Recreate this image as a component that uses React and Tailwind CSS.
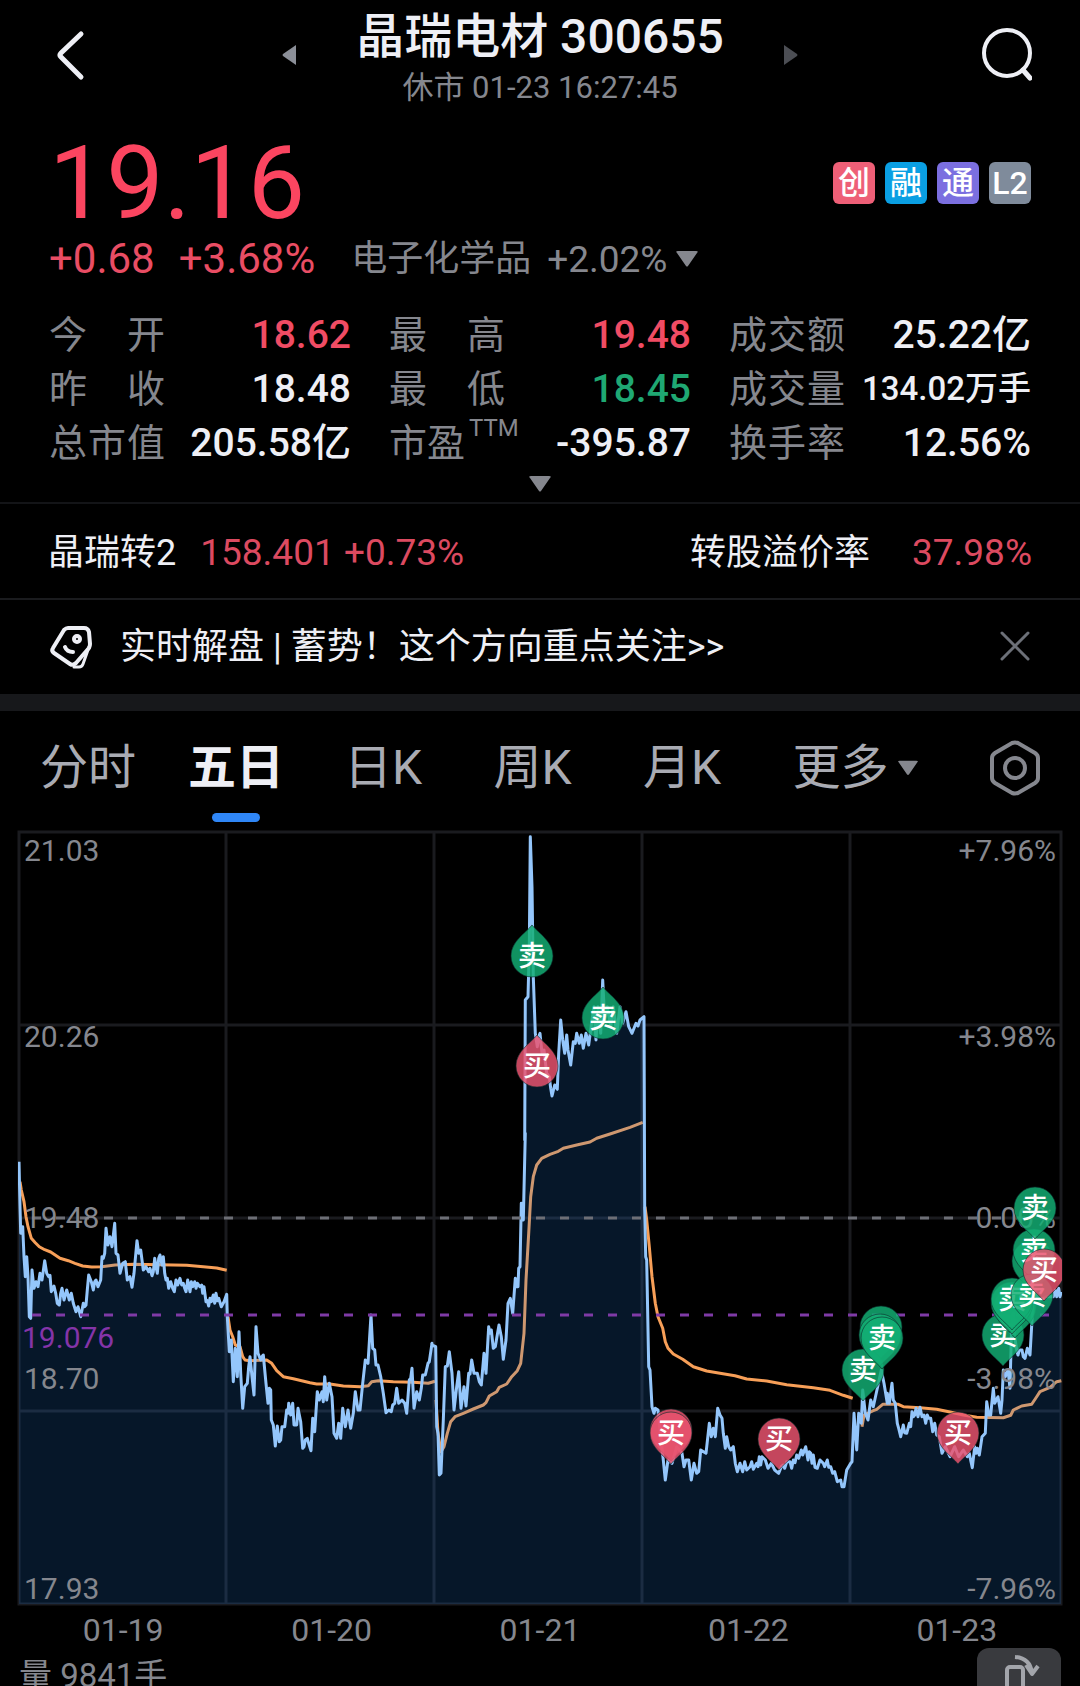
import React from 'react'

const tags = [
  { label: '创', className: 'bg-[#ee5f77]' },
  { label: '融', className: 'bg-[#0a9fe3]' },
  { label: '通', className: 'bg-[#7b6fe0]' },
  { label: 'L2', className: 'bg-[#7f8b9b]' },
]

const stats = [
  { label: '今开', value: '18.62', tone: 'text-[#f04c64]' },
  { label: '最高', value: '19.48', tone: 'text-[#f04c64]' },
  { label: '成交额', value: '25.22亿', tone: 'text-[#eeeff5]' },
  { label: '昨收', value: '18.48', tone: 'text-[#eeeff5]' },
  { label: '最低', value: '18.45', tone: 'text-[#1fa873]' },
  { label: '成交量', value: '134.02万手', tone: 'text-[#eeeff5]', small: true },
  { label: '总市值', value: '205.58亿', tone: 'text-[#eeeff5]' },
  { label: '市盈', sup: 'TTM', value: '-395.87', tone: 'text-[#eeeff5]' },
  { label: '换手率', value: '12.56%', tone: 'text-[#eeeff5]' },
]

const days = ['01-19', '01-20', '01-21', '01-22', '01-23']

// Every segment has an origin on the chart; its points are in thirds of a unit.
const priceSegments = [
  {
    x: 0,
    y: 306,
    points:
      '57,95 60,230 62,310 68,290 72,380 76,440 80,380 84,440 88,560 92,565 96,420 102,475 108,455 114,470 120,430 126,450 134,392 140,430 146,440 150,436 154,485 162,468 167,490 172,520 178,525 182,490 186,475 192,510 200,480 204,495 208,510 214,490 220,520 228,545 234,530 242,560 250,520 254,530 258,525 262,480 266,435 274,455 280,480 284,455 288,450 294,470 302,450 306,380 310,385 314,370 318,295 324,345 330,320 336,350 344,280 348,370 354,375 360,430 368,400 376,395 382,450 390,440 396,472 402,430 411,332 416,370 422,360 430,420 438,410 446,425 450,415 456,437 460,425 464,385 468,410 472,430 476,385 480,375 486,405 490,380 494,430 498,450 502,445 506,475 512,455 518,475 523,485 528,450 533,465 540,445 545,465 550,460 554,475 558,485 563,450 566,465 570,485 574,455 578,470 584,455 588,475 592,460 600,470 605,465 608,490 612,470 618,515 622,512 626,528 630,505 634,515 640,495 644,520 648,490 652,512 656,505 664,530 672,515 680,493 682,560 688,665 694,630 700,755 706,655 712,740 717,605 722,730 728,835 734,770 742,760 746,710 750,680 756,740 762,795 768,590 774,670 782,690 786,680 790,675 798,760 804,820 808,775 812,780 814,870 820,885 826,948 832,888 838,935 842,930 846,890 854,890 860,840 864,850 866,820 872,855 878,820 882,885 890,885 894,835 902,875 908,955 912,950 916,930 922,925 926,940 933,962 938,865 944,905 952,785 958,810 966,785 970,815 974,740 980,810 988,760 996,800 1002,910 1010,925 1016,880 1022,925 1028,835 1036,890 1044,840 1052,895 1060,850 1066,785 1074,840 1080,840 1088,760 1096,690 1104,700 1113,555 1118,655 1124,660 1128,705 1134,705 1142,740 1150,790 1158,848 1166,840 1174,845 1178,825 1184,820 1190,775 1196,820 1206,810 1214,820 1220,850 1228,750 1232,745 1236,715 1242,835 1250,785 1258,810 1264,775 1268,735 1276,735 1284,700 1288,695 1296,640',
  },
  {
    x: 430,
    y: 276,
    points:
      '5,735 17,740 20,980 24,1000 28,1125 33,1120 40,960 46,800 52,798 58,755 66,820 72,930 80,860 86,815 93,925 102,860 108,918 116,820 120,822 125,780 132,820 142,820 148,845 154,855 162,760 168,820 176,680 180,700 184,690 190,745 196,740 200,715 207,675 214,710 220,778 228,720 234,610 241,595 248,640 256,535 260,560 264,560 266,505 270,500 274,310 280,360 286,100',
  },
  {
    x: 440,
    y: -4,
    points:
      '254,960 256,540 264,530 268,380 271,50 276,200 280,470 286,640 292,680 296,650 300,640 306,700 312,690 320,760 328,770 332,805 336,828 344,795 352,808 356,700 362,600 368,660 374,700 380,645 384,690 392,735 400,665 406,670 410,640 418,670 424,645 430,685 438,640 446,675 456,600 462,560 468,660 474,560 482,640 488,480 494,600 502,560 512,620 520,560 530,640 540,560 548,610 558,575 566,620 576,640 588,610 594,618 600,600 612,590',
  },
  {
    x: 430,
    y: 276,
    points:
      '643,0 644,330 647,470 650,480 656,800 660,810 666,920 672,940 676,925 684,930 690,990 700,1080 706,1140 714,1080 726,1090 740,1040 756,1060 762,1100 768,1080 776,1080 784,1140 792,1090 800,1120 806,1115 812,1050 828,1060 838,970 844,1010 850,985 856,1010 863,925 870,945 876,955 880,1000 886,1045 890,1010 896,1040',
  },
  {
    x: 640,
    y: 456,
    points:
      '272,510 280,500 286,550 292,575 300,550 308,575 314,545 320,570 330,560 335,545 340,568 350,550 354,560 358,530 362,555 366,530 376,540 384,565 394,550 404,570 416,580 424,560 430,555 434,565 440,545 450,545 455,565 460,540 465,548 470,525 476,535 484,510 488,525 497,500 504,540 508,515 512,520 516,550 520,525 525,562 532,565 540,540 550,550 554,560 562,540 566,562 572,560 578,580 584,575 592,605 602,600 606,620 612,620 620,570 632,550 636,545 642,400 650,510 656,400 664,430 668,330 676,400 684,420 692,360 700,380 724,270 732,310 742,370',
  },
  {
    x: 840,
    y: 346,
    points:
      '142,670 148,700 156,640 160,690 166,700 172,760 176,775 182,800 190,765 194,788 200,790 208,760 212,770 216,725 220,740 224,735 228,715 234,740 240,712 246,740 252,735 257,760 262,735 266,745 272,745 278,785 284,760 290,795 298,800 306,850 316,830 330,860 344,830 356,860 370,840 382,860 388,850 393,875 397,893 404,830 408,850 412,835 418,855 426,800 436,790 440,695 446,735 452,735 460,655 464,700 474,680 482,730 486,690 490,600 496,620 504,600 510,655 514,500 520,430 524,500 530,540 534,555 538,540 546,540 550,560 555,565 562,535 570,555 576,450 580,350 590,380 600,390 620,380 640,380 646,360 650,380 656,355 660,380 664,365',
  },
]

const averageSegments = [
  {
    x: 0,
    y: 306,
    points:
      '60,155 64,180 72,215 78,260 84,290 94,325 106,338 118,350 134,359 152,366 180,385 205,392 225,400 248,408 275,411 305,410 345,405 400,403 480,404 560,406 610,410 650,414 680,421',
  },
  {
    x: 0,
    y: 306,
    points:
      '684,560 690,600 698,620 706,645 720,650 728,680 735,690 750,692 800,690 815,700 830,722 850,740 880,746 930,758 950,762 990,762 1030,768 1080,770 1105,767 1115,755 1135,752 1180,755 1240,757 1285,760 1305,754',
  },
  {
    x: 430,
    y: 276,
    points:
      '18,900 24,1000 33,1055 42,1040 52,1000 62,965 75,950 100,940 130,927 160,915 168,908 178,888 200,875 208,862 230,852 245,830 262,812 272,790 282,700 288,540 296,400 302,290 310,230 320,195 335,175 360,163 385,154 400,145 440,135 480,126 500,115 540,102 600,82 638,67',
  },
  {
    x: 430,
    y: 276,
    points:
      '645,320 650,360 658,440 666,530 676,610 684,650 698,685 706,725 714,745 730,762 758,778 790,800 830,813 870,820 915,827 950,837 1010,843 1070,854 1150,863 1200,871 1240,886 1268,895',
  },
  {
    x: 840,
    y: 346,
    points:
      '66,770 72,735 100,722 110,718 128,703 175,703 190,710 240,713 290,718 330,726 370,735 410,742 490,743 512,736 520,720 545,708 575,703 590,680 600,665 630,652 650,635 664,632',
  },
]

function toPoints({ x, y, points }) {
  return points
    .split(' ')
    .map((p) => {
      const [px, py] = p.split(',').map(Number)
      return `${(x + px / 3).toFixed(1)},${(y + py / 3).toFixed(1)}`
    })
    .join(' ')
}

const pricePoints = priceSegments.map(toPoints).join(' ')

const markers = [
  { x: 532, y: 132, side: 'sell', up: true },
  { x: 603, y: 194, side: 'sell', up: true },
  { x: 537, y: 242, side: 'buy', up: true },
  { x: 671, y: 606, side: 'buy', ghost: true },
  { x: 671, y: 609, side: 'buy' },
  { x: 779, y: 615, side: 'buy' },
  { x: 958, y: 609, side: 'buy' },
  { x: 863, y: 546, side: 'sell' },
  { x: 881, y: 503, side: 'sell', ghost: true },
  { x: 880, y: 511, side: 'sell', ghost: true },
  { x: 882, y: 514, side: 'sell' },
  { x: 1003, y: 511, side: 'sell' },
  { x: 1015, y: 483, side: 'sell', ghost: true },
  { x: 1012, y: 479, side: 'sell', ghost: true },
  { x: 1012, y: 475, side: 'sell' },
  { x: 1033, y: 437, side: 'sell', ghost: true },
  { x: 1034, y: 426, side: 'sell' },
  { x: 1032, y: 471, side: 'sell' },
  { x: 1035, y: 384, side: 'sell' },
  { x: 1044, y: 446, side: 'buy' },
]

const leftScale = [
  { y: 37, text: '21.03' },
  { y: 223, text: '20.26' },
  { y: 404, text: '19.48' },
  { y: 565, text: '18.70' },
  { y: 775, text: '17.93' },
]

const rightScale = [
  { y: 37, text: '+7.96%' },
  { y: 223, text: '+3.98%' },
  { y: 404, text: '0.00%' },
  { y: 565, text: '-3.98%' },
  { y: 775, text: '-7.96%' },
]

export default function StockQuote() {
  return (
    <div className="w-full overflow-hidden bg-black font-['Roboto','Noto_Sans_CJK_SC',sans-serif] text-[#eeeff5]">
      <Header />
      <Quote />
      <section className="flex h-24 items-center justify-between border-t-2 border-[#131417] px-12 pt-1 text-[36px]">
        <div className="flex items-center gap-6">
          <span>晶瑞转2</span>
          <span className="text-[37px] text-[#dc4a60]">158.401 +0.73%</span>
        </div>
        <div className="flex items-center gap-[42px]">
          <span>转股溢价率</span>
          <span className="text-[37px] text-[#dc4a60]">37.98%</span>
        </div>
      </section>
      <section className="flex h-24 items-center border-t-2 border-[#1a1b1e] px-12">
        <TagIcon className="h-12 w-12 shrink-0" />
        <a href="#live" className="ml-6 text-[36px]">实时解盘 | 蓄势！这个方向重点关注&gt;&gt;</a>
        <button aria-label="关闭" className="ml-auto">
          <CloseIcon className="h-8 w-8 text-[#6c7078]" />
        </button>
      </section>
      <div className="h-[17px] bg-[#17181b]" />
      <PeriodTabs />
      <Chart />
      <div className="grid h-10 grid-cols-5 items-center px-[19px] pt-1 text-center text-[32px] leading-9 text-[#85878e]">
        {days.map((day) => (
          <span key={day}>{day}</span>
        ))}
      </div>
      <footer className="flex h-[38px] justify-between overflow-hidden px-[19px] text-[#85878e]">
        <span className="pt-2 text-[33px] leading-10">量 9841手</span>
        <button aria-label="横屏" className="h-20 w-[84px] rounded-xl bg-[#393a3e] text-[#a3a5ab]">
          <RotateIcon className="h-20 w-[84px]" />
        </button>
      </footer>
    </div>
  )
}

function Header() {
  return (
    <header className="flex h-[112px] items-start justify-between px-12">
      <button aria-label="返回" className="mt-7">
        <BackIcon className="h-[54px] w-[50px]" />
      </button>
      <div className="flex items-start gap-[60px]">
        <button aria-label="上一只" className="mt-11">
          <svg viewBox="0 0 14 22" className="h-[22px] w-[14px] fill-[#8b8f98]">
            <path d="M14 1v20L1 12q-1-1 0-2z" />
          </svg>
        </button>
        <div className="text-center">
          <h1 className="pt-0.5 text-[48px] font-medium leading-[70px]">晶瑞电材 300655</h1>
          <p className="text-[31px] leading-8 text-[#85878e]">休市 01-23 16:27:45</p>
        </div>
        <button aria-label="下一只" className="mt-11">
          <svg viewBox="0 0 14 22" className="h-[22px] w-[14px] fill-[#4c4e54]">
            <path d="M0 1v20l13-9q1-1 0-2z" />
          </svg>
        </button>
      </div>
      <button aria-label="搜索" className="mt-7">
        <SearchIcon className="h-14 w-[50px]" />
      </button>
    </header>
  )
}

function Quote() {
  return (
    <section className="px-[49px] pt-4">
      <div className="flex h-[106px] items-center justify-between">
        <div className="pt-1 text-[102px] leading-[102px] text-[#fb4560]">19.16</div>
        <div className="flex gap-[10px] pt-1">
          {tags.map((tag) => (
            <span
              key={tag.label}
              className={`flex h-[42px] w-[42px] items-center justify-center rounded-md text-[32px] font-medium leading-none text-white ${tag.className}`}
            >
              {tag.label}
            </span>
          ))}
        </div>
      </div>
      <div className="flex h-[50px] items-center leading-none text-[#85878e]">
        <span className="text-[42px] text-[#e94d64]">+0.68</span>
        <span className="ml-6 text-[42px] text-[#e94d64]">+3.68%</span>
        <button className="ml-9 flex items-center gap-4">
          <span className="text-[36px]">电子化学品</span>
          <span className="flex items-center gap-2 text-[37px]">
            +2.02%
            <DownTriangle className="h-4 w-6" />
          </span>
        </button>
      </div>
      <dl className="mt-6 grid grid-cols-3 gap-x-[38px]">
        {stats.map((item) => (
          <div key={item.label} className="flex h-[54px] items-center justify-between whitespace-nowrap leading-[54px]">
            <dt className="flex w-[116px] justify-between text-[38px] text-[#85878e]">
              {item.sup ? (
                <span className="flex">
                  {item.label}
                  <sup className="top-0 pl-1 text-[24px] leading-6">{item.sup}</sup>
                </span>
              ) : (
                item.label.split('').map((char) => <span key={char}>{char}</span>)
              )}
            </dt>
            <dd className={item.small ? `text-[33px] font-medium ${item.tone}` : `text-[39px] font-medium ${item.tone}`}>
              {item.value}
            </dd>
          </div>
        ))}
      </dl>
      <button aria-label="展开" className="flex h-8 w-full items-start justify-center pt-[6px] text-[#85878e]">
        <DownTriangle className="h-4 w-6" />
      </button>
    </section>
  )
}

function PeriodTabs() {
  return (
    <nav className="flex h-[113px] items-center justify-between px-10 text-[48px] text-[#a9abb3]">
      <div className="flex h-full items-center gap-[52px]">
        <button>分时</button>
        <button className="relative h-full font-bold text-[#eeeff5]">
          五日
          <span className="absolute bottom-[2px] left-1/2 h-[9px] w-12 -translate-x-1/2 rounded-full bg-[#2f86f6]" />
        </button>
        <button className="pl-2">日K</button>
      </div>
      <button>周K</button>
      <button>月K</button>
      <button className="flex items-center gap-2">
        更多
        <DownTriangle className="h-4 w-[22px] text-[#85878e]" />
      </button>
      <button aria-label="设置">
        <svg viewBox="0 0 50 56" className="h-14 w-[50px]" fill="none" stroke="#85878e" strokeWidth="4">
          <path d="M22 3q3-1 6 0L45 13q3 2 3 5v20q0 3-3 5L28 53q-3 1-6 0L5 43Q2 41 2 38V18q0-3 3-5z" />
          <circle cx="25" cy="28" r="10" />
        </svg>
      </button>
    </nav>
  )
}

function Chart() {
  return (
    <svg viewBox="0 0 1080 784" className="block h-auto w-full" role="img" aria-label="五日走势">
      <defs>
        <clipPath id="plot">
          <rect x="18" y="0" width="1044" height="781" />
        </clipPath>
      </defs>

      <g stroke="#1a1b1f" strokeWidth="3" fill="none">
        <rect x="19" y="8" width="1042" height="772" />
        <path d="M19 201H1061M19 394H1061M19 587H1061M226 8V780M434 8V780M642 8V780M850 8V780" />
      </g>

      <g clipPath="url(#plot)">
        <g fill="none" stroke="#f79f58" strokeWidth="3" strokeLinejoin="round">
          {averageSegments.map((segment, i) => (
            <polyline key={i} points={toPoints(segment)} />
          ))}
        </g>
        <polygon points={`19,780 ${pricePoints} 1061,780`} fill="#2078d8" fillOpacity="0.19" />
        <polyline points={pricePoints} fill="none" stroke="#94c6fb" strokeWidth="3" strokeLinejoin="round" />
        <path d="M32 394H1061" stroke="#6d6f76" strokeWidth="3" strokeDasharray="9 15" />
        <path d="M32 491H1050" stroke="#7f3aa6" strokeWidth="3" strokeDasharray="9 15" />
      </g>

      <g fill="#85878e" fontSize="30">
        {leftScale.map((tick) => (
          <text key={tick.text} x="24" y={tick.y}>{tick.text}</text>
        ))}
        <text x="22" y="524" fill="#8434a8">19.076</text>
        {rightScale.map((tick) => (
          <text key={tick.text} x="1056" y={tick.y} textAnchor="end">{tick.text}</text>
        ))}
      </g>

      <g clipPath="url(#plot)">
        {markers.map((marker, i) => (
          <Marker key={i} {...marker} />
        ))}
      </g>
    </svg>
  )
}

function Marker({ x, y, side, up, ghost }) {
  const fill = side === 'sell' ? '#13ae74' : '#e9546f'
  return (
    <g transform={`translate(${x} ${y})`}>
      <path
        d="M0 31C-6 23-21 15-21 0A21 21 0 1 1 21 0C21 15 6 23 0 31z"
        transform={up ? 'rotate(180)' : undefined}
        fill={fill}
        fillOpacity="0.84"
        stroke="#0b2a2a"
        strokeOpacity="0.6"
      />
      {!ghost && (
        <text y="10" textAnchor="middle" fontSize="28" fontWeight="500" fill="#fff">
          {side === 'sell' ? '卖' : '买'}
        </text>
      )}
    </g>
  )
}

function DownTriangle({ className = '' }) {
  return (
    <svg viewBox="0 0 24 16" className={className} fill="currentColor">
      <path d="M3 0h18q3 0 1 2L13 15q-1 1-2 0L2 2Q0 0 3 0z" />
    </svg>
  )
}

function BackIcon({ className = '' }) {
  return (
    <svg viewBox="0 0 50 54" className={className} fill="none" stroke="currentColor" strokeWidth="5" strokeLinecap="round" strokeLinejoin="round">
      <path d="M33 6L13 25q-2 2 0 4l20 20" />
    </svg>
  )
}

function SearchIcon({ className = '' }) {
  return (
    <svg viewBox="0 0 50 56" className={className} fill="none" stroke="currentColor" strokeWidth="5" strokeLinecap="round">
      <circle cx="25" cy="25" r="23" strokeWidth="4" />
      <path d="M41 42l7 8" />
    </svg>
  )
}

function CloseIcon({ className = '' }) {
  return (
    <svg viewBox="0 0 32 32" className={className} fill="none" stroke="currentColor" strokeWidth="3" strokeLinecap="round">
      <path d="M2 2l26 26M28 2L2 28" />
    </svg>
  )
}

function TagIcon({ className = '' }) {
  return (
    <svg viewBox="0 0 48 48" className={className} fill="none" stroke="currentColor" strokeWidth="4" strokeLinecap="round" strokeLinejoin="round">
      <path d="M20 5h16q4 0 5 4l1 12q0 2-1 4L28 40q-3 3-6 1L6 30q-3-2-1-5L16 7q2-2 4-2z" />
      <path d="M41 24l-6 17q-1 3-4 3h-5" strokeWidth="3" />
      <circle cx="29" cy="16" r="3" />
      <path d="M17 24q2 5 8 5" />
    </svg>
  )
}

function RotateIcon({ className = '' }) {
  return (
    <svg viewBox="0 0 84 80" className={className} fill="none" stroke="currentColor" strokeWidth="4" strokeLinejoin="round">
      <rect x="30" y="19" width="16" height="40" rx="3" />
      <path d="M38 9q15 1 17 16M49 17l6 9 6-8" />
    </svg>
  )
}
